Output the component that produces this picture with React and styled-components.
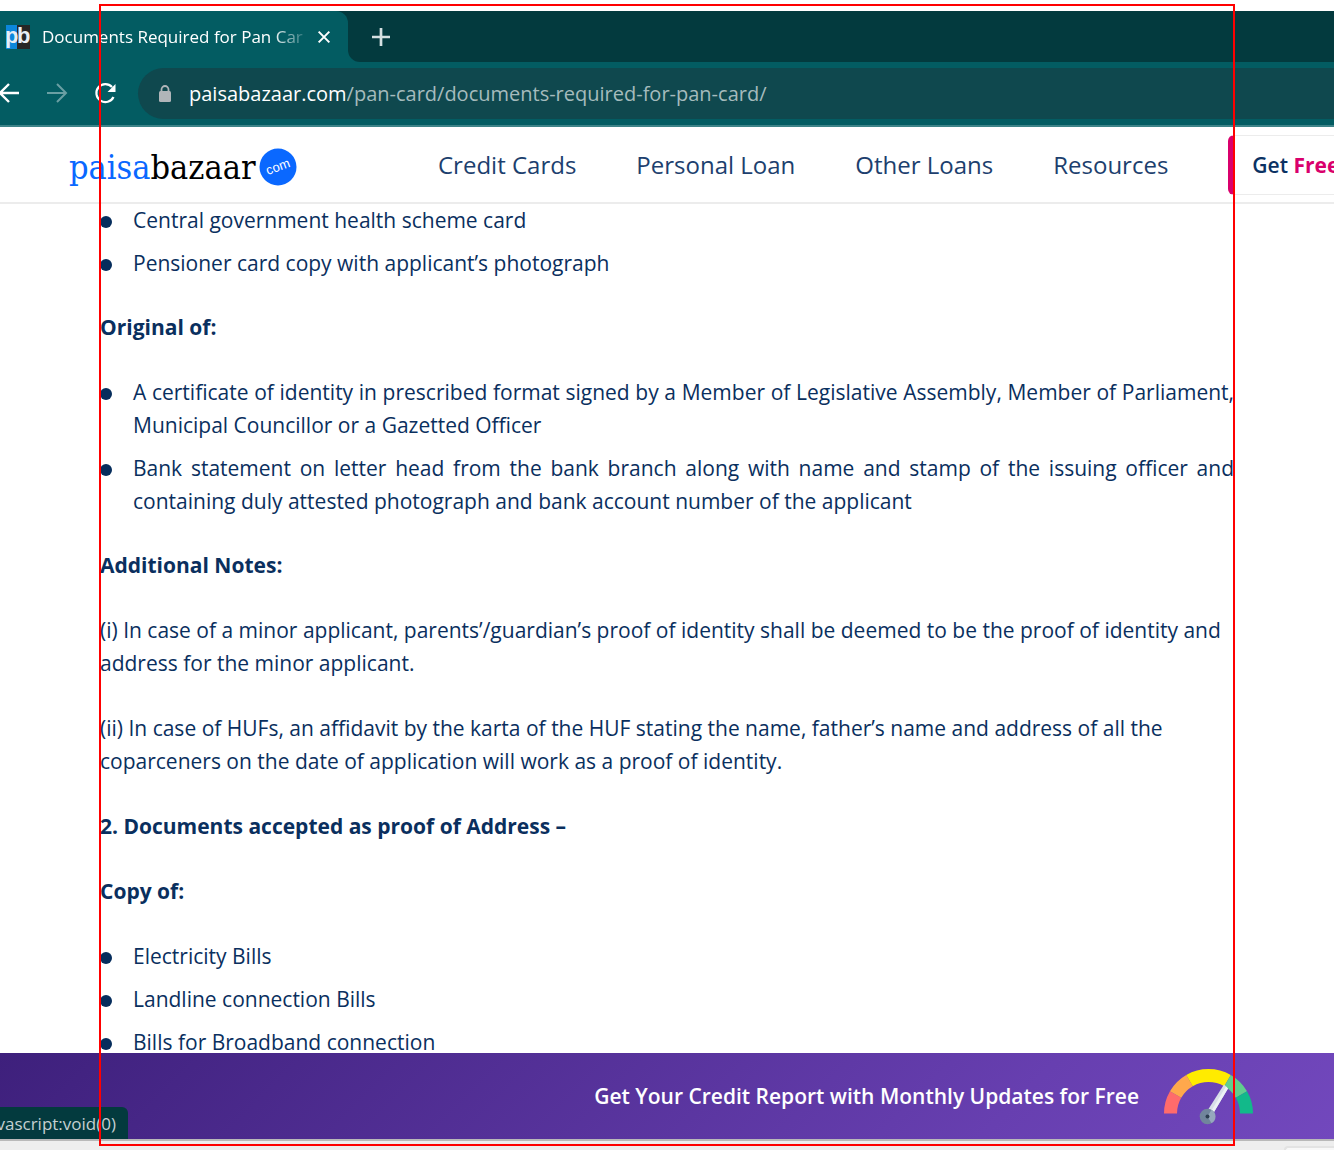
import React from "react";
import styled, { createGlobalStyle } from "styled-components";

const GlobalStyle = createGlobalStyle`
  *, *::before, *::after { box-sizing: border-box; }
  body { margin: 0; background: #fff; font-family: "Open Sans", "Noto Sans", sans-serif; }
  h2, h3, p, ul { margin: 0; padding: 0; }
  button, input { font: inherit; border: 0; background: none; padding: 0; margin: 0; }
`;

const Screen = styled.div`
  position: relative;
  display: flex;
  flex-direction: column;
  height: 100vh;
  padding-top: 11px;
  overflow: hidden;
`;

const TabStrip = styled.div`
  display: flex;
  height: 51px;
`;

const TabBack = styled.div`
  display: flex;
  flex-shrink: 0;
  background: #033a3e;
`;

const Tab = styled.div`
  display: flex;
  align-items: center;
  width: 348px;
  padding: 0 16px 0 6px;
  border-top-right-radius: 12px;
  background: #035c62;
  color: #fff;
`;

const StripBack = styled.div`
  display: flex;
  flex: 1;
  background: #035c62;
`;

const Strip = styled.div`
  display: flex;
  align-items: center;
  flex: 1;
  padding-left: 24px;
  background: #033a3e;
  border-bottom-left-radius: 12px;
`;

const TabTitle = styled.span`
  flex: 1;
  margin-left: 12px;
  font-size: 17px;
  line-height: 24px;
  white-space: nowrap;
  overflow: hidden;
  mask-image: linear-gradient(90deg, #000 84%, transparent 98%);
`;

const IconButton = styled.button`
  display: flex;
  color: ${(p) => (p.$dim ? "#6a9fa3" : "#fff")};
  flex-shrink: 0;
`;

const Toolbar = styled.div`
  display: flex;
  align-items: center;
  height: 65px;
  background: #035c62;
  border-bottom: 2px solid #3d8388;
`;

const ToolButtons = styled.div`
  display: flex;
  align-items: center;
  gap: 25px;
  margin-left: -4px;
  width: 142px;
`;

const AddressBar = styled.div`
  display: flex;
  align-items: center;
  flex: 1;
  height: 51px;
  padding-left: 20px;
  border-radius: 26px 0 0 26px;
  background: #0f484e;
  font-size: 20px;
`;

const Host = styled.label`
  margin-left: 17px;
  color: #fff;
`;

const Path = styled.input`
  flex: 1;
  min-width: 0;
  color: #a5bbbd;
  outline: none;
`;

const SiteHeader = styled.header`
  display: flex;
  align-items: center;
  height: 77px;
  padding-left: 69px;
  border-bottom: 2px solid #ececec;
  background: #fff;
  flex-shrink: 0;
`;

const Logo = styled.a`
  display: flex;
  align-items: center;
  gap: 3px;
  width: 369px;
  padding-top: 4px;
  flex-shrink: 0;
  text-decoration: none;
  font-family: "DejaVu Serif Condensed", "Liberation Serif", serif;
  font-size: 34px;
  line-height: 44px;
  color: #000;
`;

const LogoBlue = styled.span`
  color: #0a68ff;
`;

const Nav = styled.nav`
  display: flex;
  gap: 60px;
  margin-right: 60px;
`;

const NavLink = styled.a`
  color: #1d3f6e;
  font-size: 24px;
  line-height: 32px;
  text-decoration: none;
  white-space: nowrap;
`;

const ScoreButton = styled.button`
  flex: 1;
  height: 60px;
  padding-left: 17px;
  border: 1px solid #ececec;
  border-left: 7px solid #d9006c;
  border-right: 0;
  border-radius: 6px 0 0 6px;
  color: #0b3263;
  font-size: 21px;
  font-weight: 600;
  text-align: left;
  white-space: nowrap;
  overflow: hidden;
`;

const Pink = styled.span`
  color: #d9006c;
  font-weight: 700;
`;

const Article = styled.main`
  flex: 1;
  min-height: 0;
  padding: 0 100px;
  overflow: hidden;
  color: #0a2f5e;
  font-size: 21px;
  line-height: 33px;
`;

const Heading = styled.h3`
  margin: 31px 0 32px;
  font-size: 21px;
  font-weight: 700;
`;

const Paragraph = styled.p`
  margin-bottom: 32px;
`;

const List = styled.ul`
  display: grid;
  gap: 10px;
  list-style: none;
  text-align: justify;
`;

const Item = styled.li`
  display: flex;
  gap: 21px;
  &::before {
    content: "";
    flex: none;
    width: 12px;
    height: 12px;
    margin-top: 12px;
    border-radius: 50%;
    background: #062d5c;
  }
`;

const Banner = styled.footer`
  position: relative;
  display: flex;
  align-items: center;
  justify-content: flex-end;
  gap: 25px;
  height: 88px;
  padding-right: 81px;
  border-bottom: 2px solid #b9b9b9;
  background: linear-gradient(135deg, #3e207c, #673fb0 75%, #7248bd);
  color: #fff;
  font-size: 21px;
  font-weight: 600;
  flex-shrink: 0;
`;

const Status = styled.div`
  position: absolute;
  left: 0;
  bottom: 0;
  display: flex;
  align-items: center;
  justify-content: flex-end;
  width: 128px;
  height: 32px;
  padding-right: 12px;
  overflow: hidden;
  border-top-right-radius: 6px;
  background: #033a3e;
  color: #c3d0d1;
  font-size: 17px;
  font-weight: 400;
`;

const BottomEdge = styled.div`
  display: flex;
  justify-content: flex-end;
  align-items: flex-end;
  height: 9px;
  background: #eee;
  flex-shrink: 0;
`;

const Corner = styled.div`
  width: 50px;
  height: 4px;
  border: 2px solid #e3e3e3;
  border-width: 2px 0 0 2px;
  border-top-left-radius: 6px;
  background: #f8f8f8;
`;

const Frame = styled.div`
  position: absolute;
  inset: 4px 99px;
  border: 2px solid #f00;
  pointer-events: none;
`;

const Favicon = () => (
  <svg width="24" height="24" viewBox="0 0 24 24" aria-hidden="true">
    <rect width="11" height="24" fill="#0c87dc" />
    <rect x="11" width="13" height="24" fill="#262626" />
    <g fill="#e6eef5" fontFamily="Liberation Sans, sans-serif" fontSize="22" fontWeight="700">
      <text x="-1" y="18">p</text>
      <text x="11" y="18">b</text>
    </g>
  </svg>
);

const Stroke = ({ size, width, children }) => (
  <svg width={size} height={size} viewBox="0 0 24 24" fill="none" stroke="currentColor" strokeWidth={width} aria-hidden="true">
    {children}
  </svg>
);

const Lock = () => (
  <svg width="14" height="18" viewBox="0 0 14 18" aria-hidden="true">
    <path d="M3.5 7V4.500a3.500 3.500 0 0 1 7 0V7" fill="none" stroke="#b0b5b9" strokeWidth="1.800" />
    <rect x="1" y="6" width="12" height="11" rx="1.500" fill="#b0b5b9" />
  </svg>
);

const ComBadge = () => (
  <svg width="38" height="38" viewBox="0 0 38 38" aria-hidden="true">
    <circle cx="19" cy="19" r="18.500" fill="#0a68ff" />
    <text x="19" y="23" textAnchor="middle" transform="rotate(-20 19 19)" fill="#fff" fontFamily="Liberation Sans, sans-serif" fontSize="13">com</text>
  </svg>
);

const point = (deg, r) => {
  const a = (deg * Math.PI) / 180;
  return `${44.5 - r * Math.cos(a)} ${44.5 - r * Math.sin(a)}`;
};
const arc = (from, to) =>
  `M${point(from, 44.5)}A44.5 44.5 0 0 1 ${point(to, 44.5)}L${point(to, 31.5)}A31.5 31.5 0 0 0 ${point(from, 31.5)}Z`;
const bands = [
  [0, 30, "#ff6b6b"],
  [30, 60, "#ffa84c"],
  [60, 120, "#ffeb00"],
  [120, 150, "#60cf8e"],
  [150, 180, "#12b98a"],
];

const Gauge = () => (
  <svg width="89" height="56" viewBox="0 -1 89 56" overflow="visible" aria-hidden="true">
    {bands.map(([from, to, fill]) => (
      <path key={from} d={arc(from, to)} fill={fill} />
    ))}
    <path d="M44.500 40L60 15.500L64 19.500L50 43Z" fill="#d8dee8" />
    <path d="M47.500 41.500L62 17.500L64 19.500L50 43Z" fill="#edf1f5" />
    <circle cx="43.500" cy="47.500" r="7.800" fill="#71859c" />
    <path d="M43.500 47.500L47.500 40.700A7.800 7.800 0 0 1 47.500 54.300Z" fill="#96a8bd" />
    <circle cx="43.500" cy="47.500" r="2" fill="#2c3e50" />
  </svg>
);

export default function App() {
  return (
    <Screen>
      <GlobalStyle />
      <TabStrip>
        <TabBack>
          <Tab>
            <Favicon />
            <TabTitle>Documents Required for Pan Car</TabTitle>
            <IconButton aria-label="Close tab">
              <Stroke size={16} width={3}><path d="M4 4l16 16M20 4L4 20" /></Stroke>
            </IconButton>
          </Tab>
        </TabBack>
        <StripBack>
          <Strip>
            <IconButton aria-label="New tab">
              <Stroke size={18} width={3.6}><path d="M12 0v24M0 12h24" stroke="#d5e0e1" /></Stroke>
            </IconButton>
          </Strip>
        </StripBack>
      </TabStrip>
      <Toolbar>
        <ToolButtons>
          <IconButton aria-label="Back">
            <Stroke size={24} width={2.4}><path d="M23 11H4M13 2l-9 9 9 9" /></Stroke>
          </IconButton>
          <IconButton aria-label="Forward" $dim>
            <Stroke size={24} width={2}><path d="M2 11h19M12 2l9 9-9 9" /></Stroke>
          </IconButton>
          <IconButton aria-label="Reload">
            <Stroke size={24} width={2.2}>
              <path d="M19.500 15A9 9 0 1 1 18 5" />
              <path d="M21.500 2v8h-8z" fill="currentColor" stroke="none" />
            </Stroke>
          </IconButton>
        </ToolButtons>
        <AddressBar>
          <Lock />
          <Host htmlFor="address">paisabazaar.com</Host>
          <Path id="address" readOnly value="/pan-card/documents-required-for-pan-card/" />
        </AddressBar>
      </Toolbar>
      <SiteHeader>
        <Logo href="#">
          <span><LogoBlue>paisa</LogoBlue>bazaar</span>
          <ComBadge />
        </Logo>
        <Nav>
          <NavLink href="#">Credit Cards</NavLink>
          <NavLink href="#">Personal Loan</NavLink>
          <NavLink href="#">Other Loans</NavLink>
          <NavLink href="#">Resources</NavLink>
        </Nav>
        <ScoreButton>Get <Pink>Free</Pink></ScoreButton>
      </SiteHeader>
      <Article>
        <List>
          <Item>Central government health scheme card</Item>
          <Item>Pensioner card copy with applicant’s photograph</Item>
        </List>
        <Heading>Original of:</Heading>
        <List>
          <Item>A certificate of identity in prescribed format signed by a Member of Legislative Assembly, Member of Parliament, Municipal Councillor or a Gazetted Officer</Item>
          <Item>Bank statement on letter head from the bank branch along with name and stamp of the issuing officer and containing duly attested photograph and bank account number of the applicant</Item>
        </List>
        <Heading>Additional Notes:</Heading>
        <Paragraph>(i) In case of a minor applicant, parents’/guardian’s proof of identity shall be deemed to be the proof of identity and address for the minor applicant.</Paragraph>
        <Paragraph>(ii) In case of HUFs, an affidavit by the karta of the HUF stating the name, father’s name and address of all the coparceners on the date of application will work as a proof of identity.</Paragraph>
        <Heading>2. Documents accepted as proof of Address –</Heading>
        <Heading>Copy of:</Heading>
        <List>
          <Item>Electricity Bills</Item>
          <Item>Landline connection Bills</Item>
          <Item>Bills for Broadband connection</Item>
        </List>
      </Article>
      <Banner>
        <span>Get Your Credit Report with Monthly Updates for Free</span>
        <Gauge />
        <Status>javascript:void(0)</Status>
      </Banner>
      <BottomEdge><Corner /></BottomEdge>
      <Frame />
    </Screen>
  );
}
